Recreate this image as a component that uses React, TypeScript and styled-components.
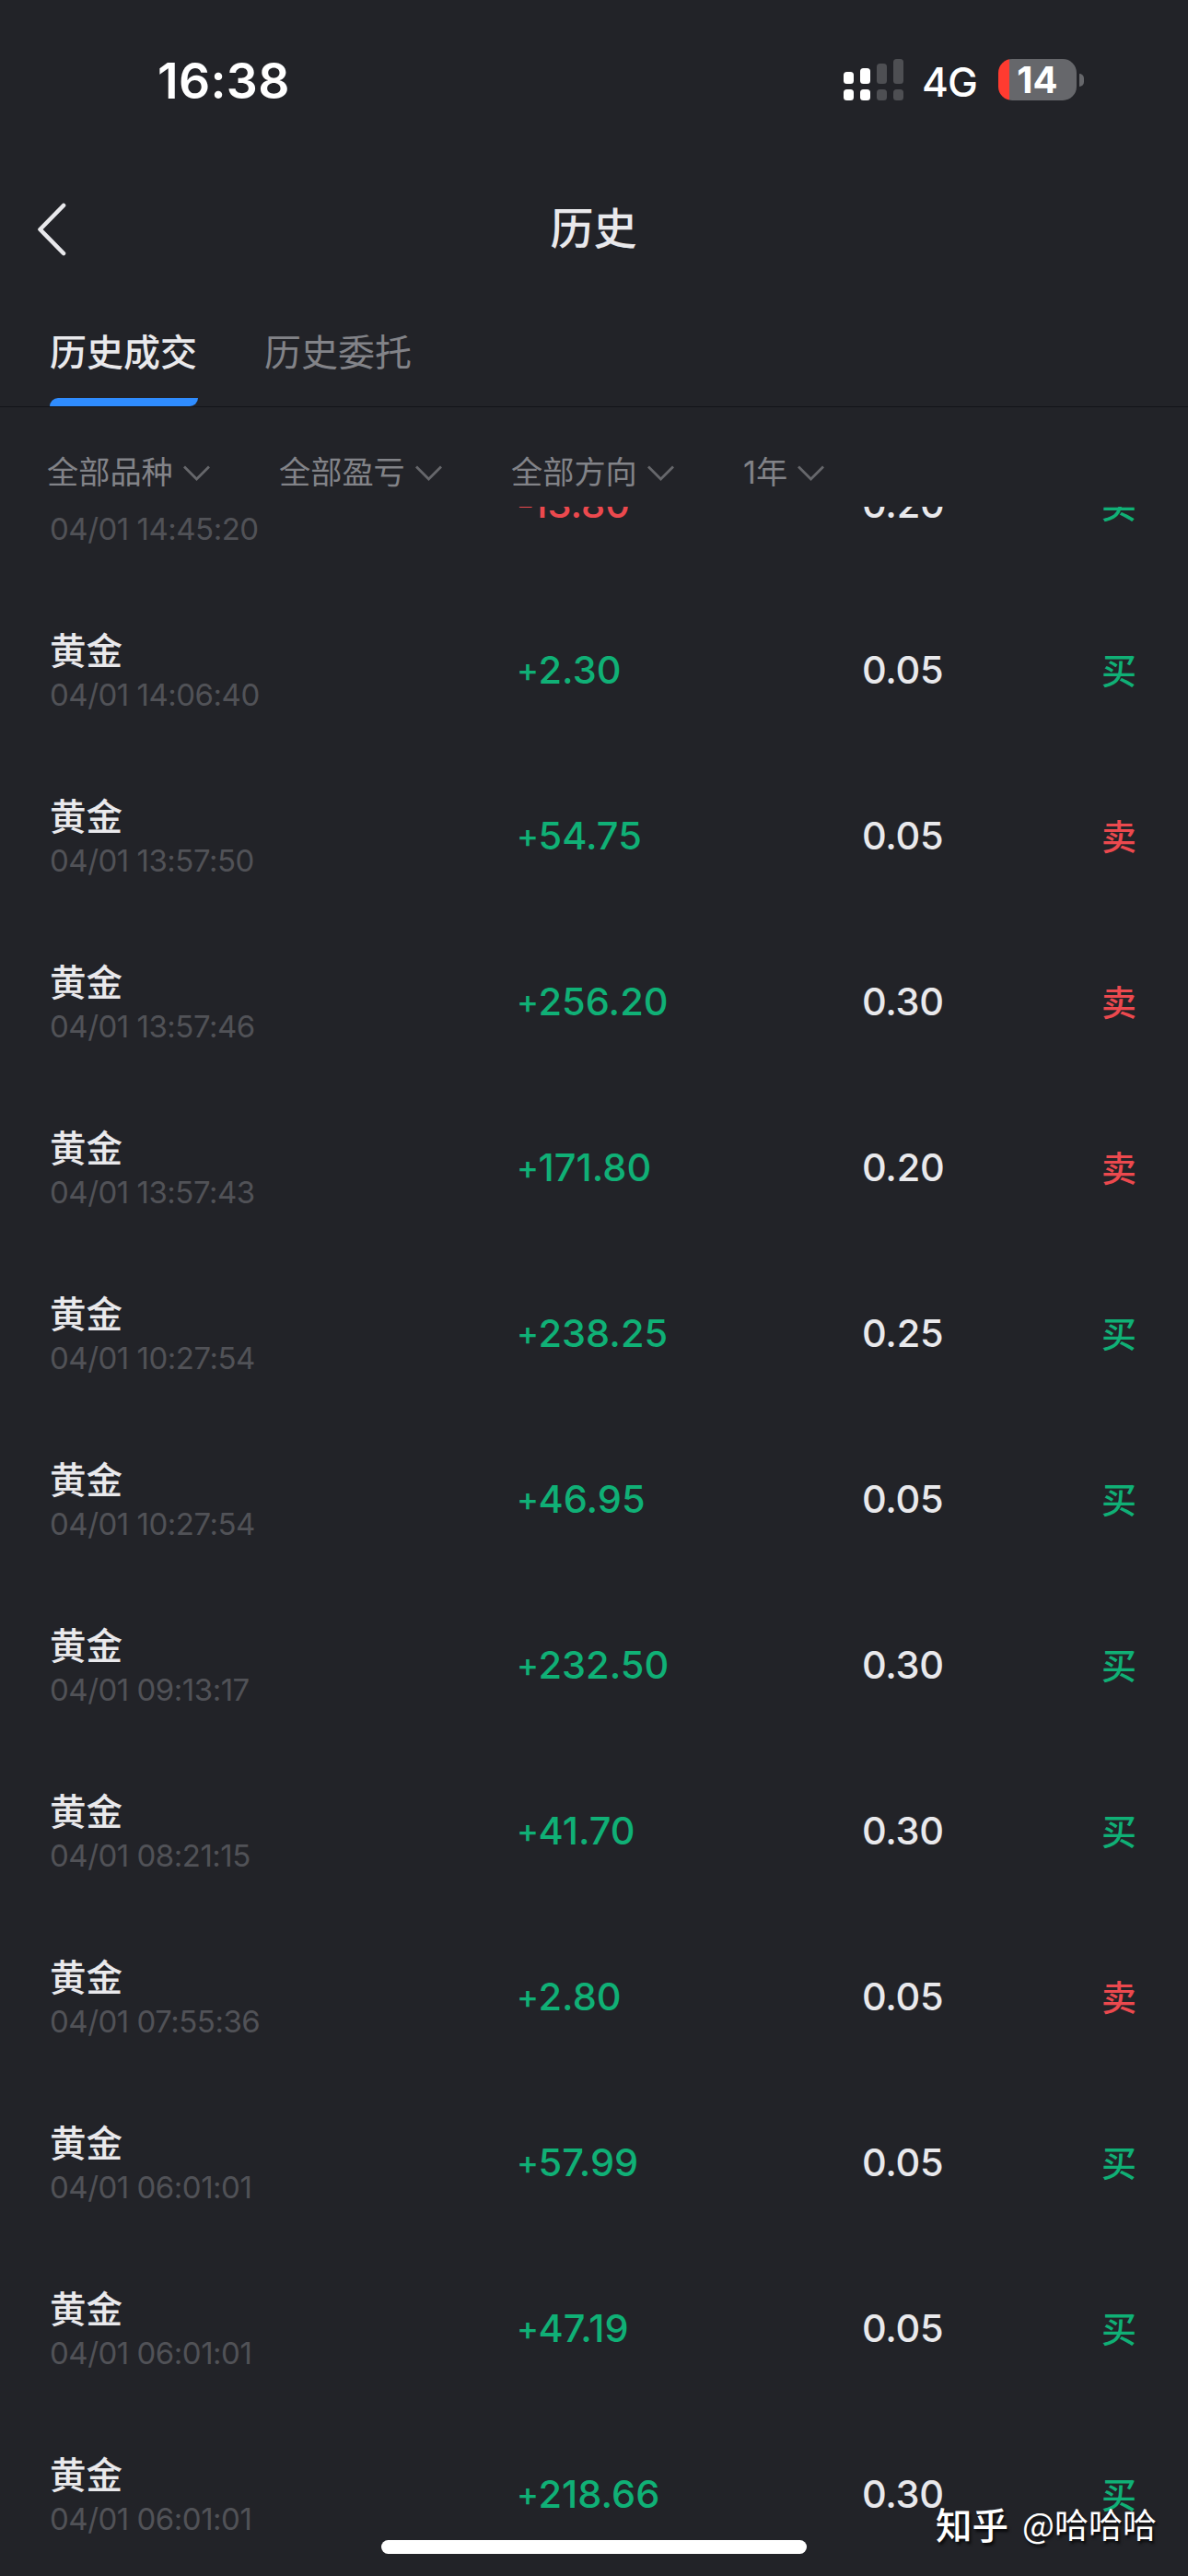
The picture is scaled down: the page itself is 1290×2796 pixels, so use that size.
import React from "react";
import styled, { createGlobalStyle } from "styled-components";

const GlobalStyle = createGlobalStyle`
  * { box-sizing: border-box; }
  html, body { margin: 0; padding: 0; background: #222328; }
`;

const GREEN = "#10b076";
const RED = "#ec494e";

const Screen = styled.div`
  position: relative;
  display: flex;
  flex-direction: column;
  width: 1290px;
  height: 2796px;
  overflow: hidden;
  background: #222328;
  color: #e9e9ec;
  font-family: Inter, "Noto Sans CJK SC", sans-serif;
`;

const StatusBar = styled.header`
  display: flex;
  justify-content: space-between;
  align-items: center;
  height: 173px;
  padding: 0 113px 0 171px;
  color: #fff;
`;

const Clock = styled.span`
  font-size: 53.5px;
  font-weight: 600;
  line-height: 60px;
  letter-spacing: 0.3px;
  padding-top: 2px;
`;

const StatusRight = styled.div`
  display: flex;
  align-items: center;
`;

const Network = styled.span`
  width: 60px;
  margin: 4px 23px 0 19px;
  font-size: 44px;
  font-weight: 500;
  line-height: 48px;
  letter-spacing: -0.8px;
  white-space: nowrap;
`;

const Battery = styled.div`
  display: flex;
  align-items: center;
  justify-content: center;
  width: 85px;
  height: 45px;
  border-radius: 15px;
  background: linear-gradient(to right, #ff3b30 12px, #66676b 12px);
  font-size: 40px;
  font-weight: 700;
  line-height: 45px;
`;

const BatteryCap = styled.i`
  width: 5px;
  height: 14px;
  margin-left: 3px;
  border-radius: 0 7px 7px 0;
  background: #66676b;
`;

const TitleBar = styled.div`
  display: grid;
  grid-template-columns: 120px 1fr 120px;
  align-items: center;
  height: 152px;
`;

const BackButton = styled.button`
  display: flex;
  padding: 0 0 0 40px;
  border: 0;
  background: none;
`;

const Title = styled.h1`
  margin: 0;
  padding: 0 1px 3px 0;
  font-size: 47px;
  font-weight: 500;
  line-height: 60px;
  text-align: center;
`;

const Tabs = styled.nav`
  display: flex;
  gap: 72px;
  height: 117px;
  padding: 0 54px;
  border-bottom: 1px solid #121318;
`;

const Tab = styled.div<{ $active?: boolean }>`
  display: flex;
  flex-direction: column;
  justify-content: space-between;
  width: 161px;
  padding-top: 31px;
  font-size: 40px;
  line-height: 54px;
  white-space: nowrap;
  font-weight: ${(p) => (p.$active ? 500 : 400)};
  color: ${(p) => (p.$active ? "#e9e9ec" : "#828388")};
`;

const TabLine = styled.div`
  height: 9px;
  border-radius: 9px 0 9px 0;
  background: #2f8cff;
`;

const Filters = styled.div`
  display: grid;
  grid-template-columns: repeat(4, 252px);
  height: 108px;
  padding: 47px 0 0 51px;
`;

const Filter = styled.div`
  display: flex;
  align-items: center;
  gap: 11px;
  height: 50px;
  color: #828388;
  font-size: 34.2px;
  line-height: 48px;
  white-space: nowrap;
`;

const FilterLabel = styled.span`
  height: 50px;
`;

const List = styled.main`
  flex: 1;
  overflow: hidden;
`;

const Rows = styled.div`
  margin-top: -93px;
`;

const Row = styled.div`
  display: grid;
  grid-template-columns: 507px 375px 1fr auto;
  height: 180px;
  padding: 0 56px 0 54px;
`;

const Instrument = styled.div`
  display: flex;
  flex-direction: column;
  padding-top: 48px;
`;

const Name = styled.span`
  font-size: 39.5px;
  font-weight: 500;
  line-height: 45px;
`;

const Time = styled.span`
  color: #515257;
  font-size: 33px;
  line-height: 48px;
  letter-spacing: -0.5px;
  white-space: nowrap;
  font-feature-settings: "calt" 0;
`;

const Figure = styled.span<{ $color?: string }>`
  color: ${(p) => p.$color ?? "#e9e9ec"};
  font-size: 41.5px;
  font-weight: 500;
  line-height: 180px;
  letter-spacing: ${(p) => (p.$color ? "0" : "-0.3px")};
`;

const Plus = styled.span`
  font-size: 36px;
  margin-right: -0.5px;
  vertical-align: 2.5px;
  line-height: 1;
`;

const Minus = styled.span`
  margin-right: -3px;
  font-feature-settings: "calt" 0;
`;

const Side = styled.span<{ $color: string }>`
  color: ${(p) => p.$color};
  font-family: "Noto Sans CJK SC", sans-serif;
  font-size: 38px;
  font-weight: 500;
  line-height: 178px;
`;

const Watermark = styled.div`
  position: absolute;
  right: 34px;
  bottom: 32px;
  display: flex;
  align-items: center;
  gap: 15px;
  color: #fff;
  font-family: "Noto Sans CJK SC", sans-serif;
  font-size: 37px;
  line-height: 50px;
  text-shadow: 2px 3px 3px rgba(0, 0, 0, 0.7);
`;

const Brand = styled.span`
  font-size: 39.5px;
  font-weight: 500;
`;

const HomeIndicator = styled.div`
  position: absolute;
  left: 414px;
  bottom: 24px;
  width: 462px;
  height: 15px;
  border-radius: 8px;
  background: #fff;
`;

const Signal = () => (
  <svg width="66" height="46" viewBox="0 0 66 46" fill="#fff">
    {[14, 10, 5, 0].map((top, i) => (
      <g key={top} fill={i < 2 ? "#fff" : "#4e4f53"}>
        <rect x={i * 18} y={top} width="11" height={27 - top} rx="3.5" />
        <rect x={i * 18} y="33" width="11" height="12" rx="3.5" />
      </g>
    ))}
  </svg>
);

const Chevron = () => (
  <svg width="30" height="18" viewBox="0 0 30 18" fill="none" stroke="#66676b" strokeWidth="2.8">
    <path d="M1 1.5 14.500 15 28 1.500" />
  </svg>
);

const filters = ["全部品种", "全部盈亏", "全部方向", "1年"];

type Deal = [time: string, profit: string, lots: string, side: "买" | "卖"];

const deals: Deal[] = [
  ["04/01 14:45:20", "-13.80", "0.20", "买"],
  ["04/01 14:06:40", "+2.30", "0.05", "买"],
  ["04/01 13:57:50", "+54.75", "0.05", "卖"],
  ["04/01 13:57:46", "+256.20", "0.30", "卖"],
  ["04/01 13:57:43", "+171.80", "0.20", "卖"],
  ["04/01 10:27:54", "+238.25", "0.25", "买"],
  ["04/01 10:27:54", "+46.95", "0.05", "买"],
  ["04/01 09:13:17", "+232.50", "0.30", "买"],
  ["04/01 08:21:15", "+41.70", "0.30", "买"],
  ["04/01 07:55:36", "+2.80", "0.05", "卖"],
  ["04/01 06:01:01", "+57.99", "0.05", "买"],
  ["04/01 06:01:01", "+47.19", "0.05", "买"],
  ["04/01 06:01:01", "+218.66", "0.30", "买"],
];

export default function App() {
  return (
    <Screen lang="zh-CN">
      <GlobalStyle />
      <StatusBar>
        <Clock>16:38</Clock>
        <StatusRight>
          <Signal />
          <Network>4G</Network>
          <Battery>14</Battery>
          <BatteryCap />
        </StatusRight>
      </StatusBar>
      <TitleBar>
        <BackButton aria-label="返回">
          <svg width="32" height="60" viewBox="0 0 32 60" fill="none" stroke="#e9e9ec" strokeWidth="4.6" strokeLinecap="round" strokeLinejoin="round">
            <path d="M29 4 3.500 30 29 56" />
          </svg>
        </BackButton>
        <Title>历史</Title>
      </TitleBar>
      <Tabs>
        <Tab $active>
          历史成交
          <TabLine />
        </Tab>
        <Tab>历史委托</Tab>
      </Tabs>
      <Filters>
        {filters.map((label) => (
          <Filter key={label}>
            <FilterLabel>{label}</FilterLabel>
            <Chevron />
          </Filter>
        ))}
      </Filters>
      <List>
        <Rows>
          {deals.map(([time, profit, lots, side], i) => {
            const gain = profit.startsWith("+");
            return (
              <Row key={i}>
                <Instrument>
                  <Name>黄金</Name>
                  <Time>{time}</Time>
                </Instrument>
                <Figure $color={gain ? GREEN : RED}>
                  {gain ? <Plus>+</Plus> : <Minus>-</Minus>}
                  {profit.slice(1)}
                </Figure>
                <Figure>{lots}</Figure>
                <Side $color={side === "买" ? GREEN : RED}>{side}</Side>
              </Row>
            );
          })}
        </Rows>
      </List>
      <Watermark>
        <Brand>知乎</Brand>
        <span>@哈哈哈</span>
      </Watermark>
      <HomeIndicator />
    </Screen>
  );
}
